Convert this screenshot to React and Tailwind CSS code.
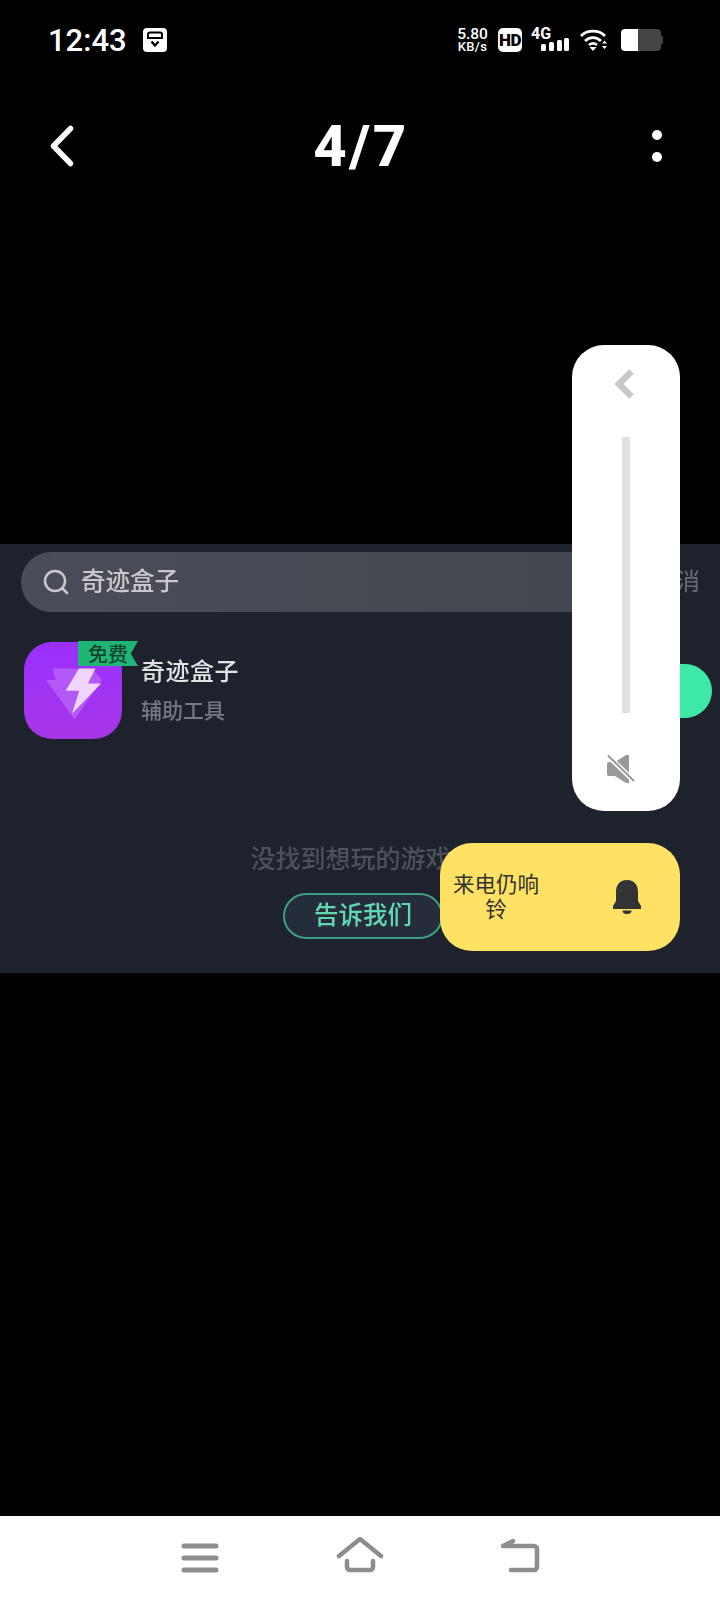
import React from 'react';

const FONT = "font-['Roboto','Noto_Sans_CJK_SC',sans-serif]";

function StatusBar() {
  return (
    <div className="h-[80px] pl-[48px] pr-[57px] flex items-center justify-between text-white">
      <div className="flex items-center gap-[16px]">
        <span className="text-[31px] leading-none font-medium">12:43</span>
        <svg width="24" height="24" viewBox="0 0 24 24">
          <rect width="24" height="24" rx="4" fill="#fff" />
          <path d="M5 11V6.500A2 2 0 0 1 7 4.500h10a2 2 0 0 1 2 2V11" fill="none" stroke="#000" strokeWidth="2" />
          <rect x="5" y="9" width="14" height="2" fill="#000" />
          <path d="M8.500 13.500l3.500 4 3.500-4" fill="none" stroke="#000" strokeWidth="2.200" />
        </svg>
      </div>
      <div className="flex items-center">
        <div className="w-[31px] h-[24px] flex flex-col items-center font-medium">
          <span className="text-[15.500px] leading-[13px]">5.80</span>
          <span className="text-[13px] leading-[11px] tracking-[0.3px]">KB/s</span>
        </div>
        <div className="ml-[10px] w-[24px] h-[24px] rounded-[5px] bg-white text-black flex items-center justify-center text-[17px] leading-none font-black tracking-[-0.5px]">HD</div>
        <div className="ml-[9px] w-[38px] h-[24px] relative">
          <span className="absolute left-0 top-[-2px] text-[16px] leading-[16px] font-bold">4G</span>
          <svg className="absolute left-0 top-0" width="38" height="24" viewBox="0 0 38 24" fill="#fff">
            <rect x="10" y="16" width="5" height="7" rx="1.500" />
            <rect x="18" y="14" width="5" height="9" rx="1.500" />
            <rect x="26" y="12" width="5" height="11" rx="1.500" />
            <rect x="33" y="10" width="5" height="13" rx="1.500" />
          </svg>
        </div>
        <svg className="ml-[11px]" width="28" height="24" viewBox="0 0 28 24">
          <g fill="none" stroke="#fff" strokeWidth="2.800">
            <path d="M1 8C7 1.500 19 1.500 25 8" />
            <path d="M5 13C9.500 8.500 16.500 8.500 21 13" />
            <path d="M9 17C11.500 15 14.500 15 17 17" />
          </g>
          <path d="M9.500 19h7L13 23z" fill="#fff" />
          <path d="M22 15.500l2.500-3 2.500 3zM22 18h5l-2.500 3z" fill="#fff" />
        </svg>
        <svg className="ml-[13px]" width="42" height="22" viewBox="0 0 42 22">
          <path d="M17 0H36a4 4 0 0 1 4 4V18a4 4 0 0 1-4 4H17z" fill="#444" />
          <rect x="40" y="7" width="2" height="8" rx="1" fill="#444" />
          <path d="M17 0H4A4 4 0 0 0 0 4V18a4 4 0 0 0 4 4H17z" fill="#fff" />
        </svg>
      </div>
    </div>
  );
}

function Header() {
  return (
    <div className="h-[132px] grid grid-cols-[1fr_auto_1fr] items-center pl-[50px] pr-[58px] text-white">
      <svg width="24" height="42" viewBox="0 0 24 42" fill="none" stroke="#fff" strokeWidth="5.500" strokeLinecap="round" strokeLinejoin="round">
        <path d="M20.500 3.500L3.500 21l17 17.500" />
      </svg>
      <span className="ml-[10px] text-[58px] leading-none font-extrabold tracking-[2.500px]">4/7</span>
      <div className="flex flex-col items-end gap-[12px]">
        <div className="w-[10px] h-[10px] rounded-full bg-white" />
        <div className="w-[10px] h-[10px] rounded-full bg-white" />
      </div>
    </div>
  );
}

function AppIcon() {
  return (
    <div className="relative w-[98px] h-[97px] shrink-0 rounded-[28px] bg-gradient-to-b from-[#9a2fff] to-[#a735e6]">
      <svg className="absolute inset-0" width="98" height="97" viewBox="72 335 290 293">
        <path d="M135 450H165L155 415H275L305 450L222 568Z" fill="#c98afa" opacity="0.45" />
        <path d="M235 415L195 482H236L214 552L302 460H262L285 415Z" fill="#f0d6ff" />
      </svg>
      <div className="absolute left-[54px] top-[-1px] w-[60px] h-[25px] bg-[#1fb574] [clip-path:polygon(0_0,100%_0,88%_50%,100%_100%,0_100%)] flex items-center pl-[10px] pt-[3px] text-[20px] leading-none font-medium text-[#12402f]">免费</div>
    </div>
  );
}

function SearchPanel() {
  return (
    <div className="h-[429px] bg-[#1e222d] pt-[8px]">
      <div className="blur-[0.5px]">
        <div className="flex items-center pl-[21px] pr-[20px]">
          <div className="w-[620px] h-[60px] rounded-[30px] bg-gradient-to-r from-[#4a4c57] to-[#44464f] flex items-center pl-[22px] gap-[12px]">
            <svg width="26" height="26" viewBox="0 0 26 26" fill="none" stroke="#c9cacd" strokeWidth="2.500" strokeLinecap="round">
              <circle cx="12" cy="12" r="10" />
              <path d="M19.500 19.500L24 24" />
            </svg>
            <span className="text-[24.500px] leading-none font-medium text-[#c8c9cc]">奇迹盒子</span>
          </div>
          <span className="ml-auto text-[24px] leading-none text-[#6a6c74]">取消</span>
        </div>
        <div className="mt-[30px] pl-[24px] pr-[8px] flex items-start">
          <AppIcon />
          <div className="ml-[19px] pt-[15px] flex flex-col">
            <span className="text-[24px] leading-[30px] tracking-[0.5px] font-medium text-[#e2e3e5]">奇迹盒子</span>
            <span className="mt-[11px] text-[21px] leading-[26px] font-medium text-[#767982]">辅助工具</span>
          </div>
          <div className="ml-auto mt-[22px] w-[120px] h-[54px] rounded-[27px] bg-[#3ee8a5]" />
        </div>
        <div className="mt-[106px] pl-[6px] flex flex-col items-center">
          <span className="text-[25px] leading-[30px] font-medium text-[#4e515a]">没找到想玩的游戏？</span>
          <div className="mt-[18px] w-[160px] h-[46px] rounded-[23px] border-2 border-[#3d9f83] bg-[#252c3a] flex items-center justify-center text-[24.500px] leading-none font-medium text-[#62d8b0]">告诉我们</div>
        </div>
      </div>
    </div>
  );
}

function NavBar() {
  return (
    <div className="h-[84px] bg-white flex items-center justify-center gap-[112px]">
      <svg width="48" height="48" viewBox="0 0 48 48" fill="none" stroke="#8e8e8e" strokeWidth="5" strokeLinecap="round">
        <path d="M8 12h32M8 24h32M8 36h32" />
      </svg>
      <svg width="48" height="48" viewBox="0 0 48 48" fill="none" stroke="#8e8e8e" strokeWidth="4.500" strokeLinecap="round" strokeLinejoin="round">
        <path d="M3 22L24 5l21 17" />
        <path d="M11 27v6a3 3 0 0 0 3 3h20a3 3 0 0 0 3-3v-6" />
      </svg>
      <svg width="48" height="48" viewBox="0 0 48 48" fill="none" stroke="#8e8e8e" strokeWidth="4.500" strokeLinecap="round" strokeLinejoin="round">
        <path d="M15 36h23a3 3 0 0 0 3-3V15a3 3 0 0 0-3-3H7l10-5" />
      </svg>
    </div>
  );
}

function VolumePanel() {
  return (
    <div className="absolute left-[572px] top-[345px] w-[108px] h-[466px] rounded-[32px] bg-white flex flex-col items-center pt-[24px]">
      <svg className="-ml-[5px]" width="20" height="30" viewBox="0 0 20 30" fill="none" stroke="#c8c8c8" strokeWidth="6.500">
        <path d="M17.500 2.500L5 15l12.500 12.500" />
      </svg>
      <div className="mt-[38px] w-[8px] h-[276px] bg-[#e0e0e0]" />
      <svg className="mt-[41px] -ml-[10px]" width="30" height="30" viewBox="0 0 30 30">
        <path d="M1 10a2 2 0 0 1 2-2h6l11-7h3v28h-3L9 22H3a2 2 0 0 1-2-2z" fill="#999" />
        <path d="M1 1L29 28" stroke="#fff" strokeWidth="5" />
        <path d="M2 1.500L28 27" stroke="#999" strokeWidth="2" />
      </svg>
    </div>
  );
}

function RingPanel() {
  return (
    <div className="absolute left-[440px] top-[843px] w-[240px] h-[108px] rounded-[32px] bg-[#ffe264] flex items-center pl-[13px]">
      <div className="w-[86px] text-center text-[21.500px] leading-[25px] text-[#333]">来电仍响铃</div>
      <svg className="ml-[74px]" width="28" height="34" viewBox="0 0 28 34" fill="#333">
        <path d="M14 0C6 0 3 6 3 12v9l-3 5v3h28v-3l-3-5v-9C25 6 22 0 14 0z" />
        <path d="M9.500 30.500h9a4.500 3.500 0 0 1-9 0z" />
      </svg>
    </div>
  );
}

export default function App() {
  return (
    <div className={`relative w-[720px] h-[1600px] bg-black flex flex-col overflow-hidden ${FONT}`}>
      <StatusBar />
      <Header />
      <div className="h-[332px]" />
      <SearchPanel />
      <div className="flex-1" />
      <NavBar />
      <VolumePanel />
      <RingPanel />
    </div>
  );
}
